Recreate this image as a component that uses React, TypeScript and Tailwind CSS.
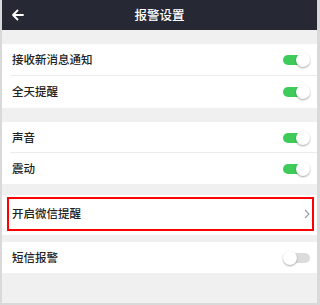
import React from "react";

const font = { fontFamily: '"Noto Sans CJK SC", "Noto Sans", sans-serif' };

function Toggle({ on }: { on: boolean }) {
  return (
    <div className="relative w-[27px] h-[14px] flex items-center">
      <div
        className={
          on
            ? "absolute left-0 right-[2px] h-[10px] rounded-full bg-[#3fcb5a]"
            : "absolute left-[4px] right-0 h-[10px] rounded-full bg-[#dcdcdc]"
        }
      />
      <div
        className={
          on
            ? "absolute right-0 w-[14px] h-[14px] rounded-full bg-white shadow-[0_1px_2px_rgba(0,0,0,0.35)]"
            : "absolute left-0 w-[14px] h-[14px] rounded-full bg-white shadow-[0_1px_2px_rgba(0,0,0,0.35)]"
        }
      />
    </div>
  );
}

function Row({ label, on, divider, tall }: { label: string; on: boolean; divider?: boolean; tall?: boolean }) {
  return (
    <div className={(tall ? "h-[32px]" : "h-[31px]") + " relative flex items-center justify-between pl-[10px] pr-[7px]"}>
      <span className="text-[11.5px] font-medium text-[#222]">{label}</span>
      <Toggle on={on} />
      {divider && <div className="absolute left-[8px] right-0 bottom-0 h-px bg-[#ececec]" />}
    </div>
  );
}

export default function App() {
  return (
    <div className="w-[320px] h-[305px] bg-[#d9d9d9] pl-[2px] pr-[3px] pb-[2px]" style={font}>
      <div className="h-full bg-[#f0f0f0] flex flex-col">
        <div className="h-[30px] bg-[#262833] flex items-center relative">
          <svg className="absolute left-[9px]" width="14" height="14" viewBox="0 0 14 14" fill="none" stroke="white" strokeWidth="1.8" strokeLinecap="round" strokeLinejoin="round">
            <path d="M12 7H2M6.5 2.5L2 7l4.5 4.5" />
          </svg>
          <span className="mx-auto text-white text-[12.5px] font-medium">报警设置</span>
        </div>
        <div className="h-[14px]" />
        <div className="bg-white">
          <Row label="接收新消息通知" on divider tall />
          <Row label="全天提醒" on tall />
        </div>
        <div className="h-[14px]" />
        <div className="bg-white">
          <Row label="声音" on divider />
          <Row label="震动" on />
        </div>
        <div className="h-[11px]" />
        <div className="bg-white h-[40px] flex items-start pt-[2px]">
          <div className="ml-[5px] mr-[3px] flex-1 h-[34px] border-2 border-[#ff0000] flex items-center justify-between pl-[3px] pr-[1px]">
            <span className="text-[11.5px] font-medium text-[#222]">开启微信提醒</span>
            <svg width="8" height="10" viewBox="0 0 8 10" fill="none" stroke="#9aa0aa" strokeWidth="1.2">
              <path d="M2 1l4 4-4 4" />
            </svg>
          </div>
        </div>
        <div className="h-[7px]" />
        <div className="bg-white">
          <Row label="短信报警" on={false} />
        </div>
      </div>
    </div>
  );
}
